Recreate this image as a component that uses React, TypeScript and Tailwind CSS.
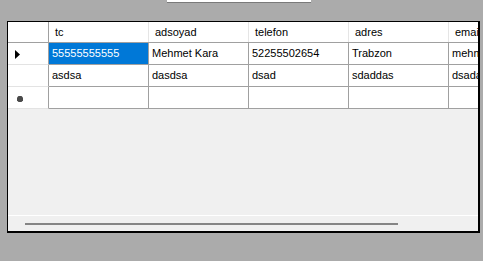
import React from 'react';

interface GridRow {
  tc: string;
  adsoyad: string;
  telefon: string;
  adres: string;
  email: string;
}

const columns: (keyof GridRow)[] = ['tc', 'adsoyad', 'telefon', 'adres', 'email'];

const rows: GridRow[] = [
  { tc: '55555555555', adsoyad: 'Mehmet Kara', telefon: '52255502654', adres: 'Trabzon', email: 'mehmet@mail.com' },
  { tc: 'asdsa', adsoyad: 'dasdsa', telefon: 'dsad', adres: 'sdaddas', email: 'dsadasd' },
];

const font = { fontFamily: '"Liberation Sans", Arial, sans-serif' };

// current-row marker in the row header
const RowArrow = () => (
  <svg width="5" height="9" viewBox="0 0 5 9" className="ml-[7px] mt-[1px]">
    <path d="M0 0 L5 4.5 L0 9 Z" fill="#000" />
  </svg>
);

// new-row marker
const NewRowMark = () => (
  <svg width="6" height="6" viewBox="0 0 6 6" className="ml-[9px] mt-[2px]">
    <path d="M1.5 0 H4.5 L6 1.5 V4.5 L4.5 6 H1.5 L0 4.5 V1.5 Z" fill="#4a4a4a" />
  </svg>
);

export default function App() {
  return (
    <div className="w-[483px] h-[261px] bg-[#ababab] overflow-hidden text-[11px] text-black" style={font}>
      {/* textbox peeking in at the top edge */}
      <div className="ml-[167px] w-[144px] h-[3px] bg-white border-b border-[#7a7a7a]" />

      <div className="mt-[18px] ml-[7px] w-[473px] h-[212px] border-t border-l border-r-2 border-b-2 border-black bg-[#f0f0f0] flex flex-col overflow-hidden">
        <div className="flex-1 overflow-hidden">
          <div className="w-max">
            {/* header */}
            <div className="flex h-[21px] bg-white border-b border-[#a0a0a0]">
              <div className="w-[41px] border-r border-[#a0a0a0]" />
              {columns.map((c) => (
                <div key={c} className="w-[100px] border-r border-[#e5e5e5] pl-[6px] flex items-center">
                  {c}
                </div>
              ))}
            </div>

            {rows.map((r, i) => (
              <div key={i} className="flex h-[22px] bg-white">
                <div className="w-[41px] border-r border-r-[#a0a0a0] border-b border-b-[#e3e3e3] flex items-center">
                  {i === 0 && <RowArrow />}
                </div>
                {columns.map((c, j) => (
                  <div
                    key={c}
                    className={`w-[100px] border-r border-b border-[#a0a0a0] pl-[3px] flex items-center whitespace-nowrap overflow-hidden ${
                      i === 0 && j === 0 ? 'bg-[#0078d7] text-white' : ''
                    }`}
                  >
                    {r[c]}
                  </div>
                ))}
              </div>
            ))}

            <div className="flex h-[22px] bg-white">
              <div className="w-[41px] border-r border-r-[#a0a0a0] border-b border-b-[#e3e3e3] flex items-center">
                <NewRowMark />
              </div>
              {columns.map((c) => (
                <div key={c} className="w-[100px] border-r border-b border-[#a0a0a0]" />
              ))}
            </div>
          </div>
        </div>

        {/* horizontal scrollbar */}
        <div className="h-[16px] border-t border-white pt-[7px] pl-[17px]">
          <div className="w-[373px] h-[2px] bg-[#858585]" />
        </div>
      </div>
    </div>
  );
}
